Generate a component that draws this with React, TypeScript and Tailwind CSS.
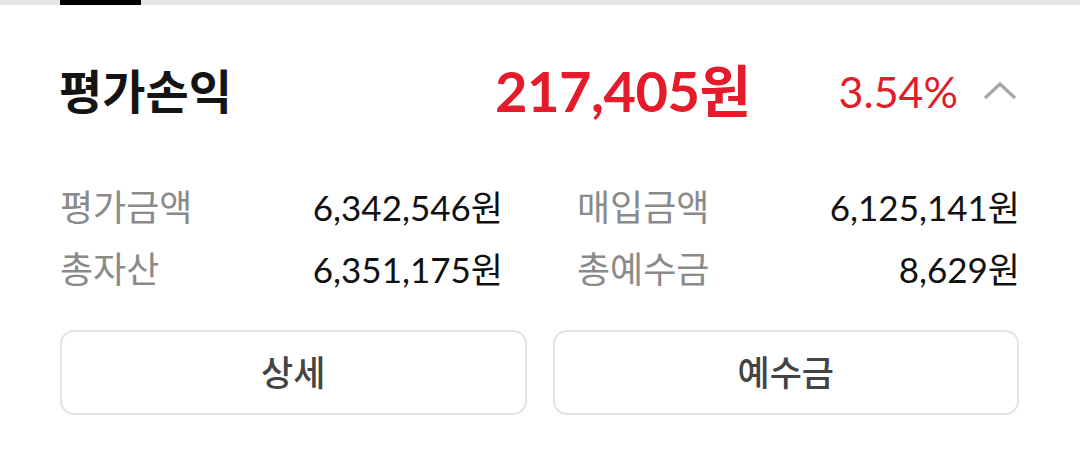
import React from "react";

const font = { fontFamily: "Lato, 'Noto Sans CJK KR', sans-serif" };

function Row({ label, value }: { label: string; value: string }) {
  return (
    <div className="flex items-center justify-between h-[62px]">
      <span className="text-[36px] text-[#8a8a8a] leading-none">{label}</span>
      <span className="text-[35px] text-[#111111] leading-none">{value}</span>
    </div>
  );
}

export default function App() {
  return (
    <div className="w-[1080px] h-[466px] bg-white overflow-hidden" style={font}>
      <div className="h-[5px] bg-[#e6e6e6] flex">
        <div className="ml-[60px] w-[81px] h-full bg-black" />
      </div>

      <div className="mt-[54px] h-[64px] pl-[59px] pr-[63px] flex items-center">
        <span className="flex-1 text-[47px] font-bold text-[#141414] leading-none">평가손익</span>
        <span className="text-[56px] font-bold text-[#e31b2a] leading-none tracking-[-0.5px]">217,405원</span>
        <span className="ml-[88px] text-[43px] text-[#e31b2a] leading-none">3.54%</span>
        <svg className="ml-[25px]" width="34" height="18" viewBox="0 0 34 18">
          <polyline points="2,16 17,2 32,16" fill="none" stroke="#a6a6a6" strokeWidth="3.2" />
        </svg>
      </div>

      <div className="mt-[53px] pl-[60px] pr-[60px] grid grid-cols-2 gap-x-[74px]">
        <div>
          <Row label="평가금액" value="6,342,546원" />
          <Row label="총자산" value="6,351,175원" />
        </div>
        <div>
          <Row label="매입금액" value="6,125,141원" />
          <Row label="총예수금" value="8,629원" />
        </div>
      </div>

      <div className="mt-[30px] pl-[60px] pr-[61px] grid grid-cols-2 gap-x-[26px]">
        <button className="h-[85px] rounded-[14px] border-[2.5px] border-[#e3e3e3] bg-white text-[35px] font-medium text-[#444444] flex items-center justify-center">
          상세
        </button>
        <button className="h-[85px] rounded-[14px] border-[2.5px] border-[#e3e3e3] bg-white text-[35px] font-medium text-[#444444] flex items-center justify-center">
          예수금
        </button>
      </div>
    </div>
  );
}
